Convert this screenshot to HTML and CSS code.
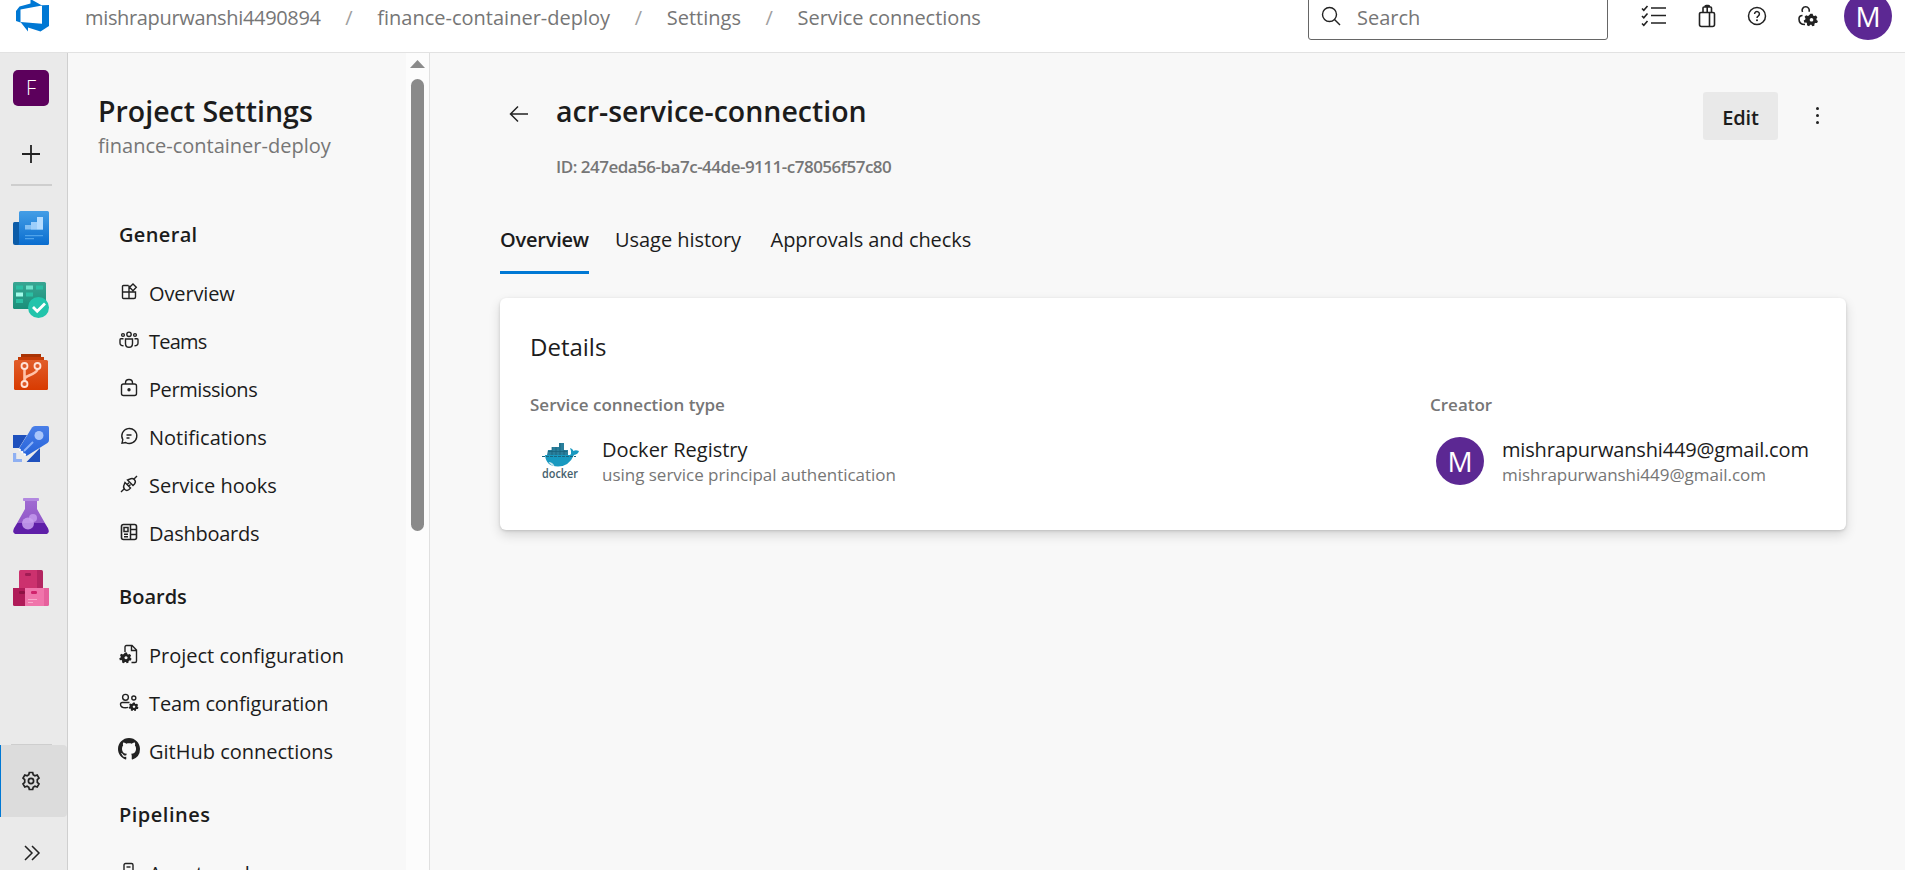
FILE: index.html
```html
<!DOCTYPE html>
<html lang="en">
<head>
<meta charset="utf-8">
<title>acr-service-connection - Service connections</title>
<link rel="stylesheet" href="styles.css">
</head>
<body>
<svg width="0" height="0" class="defs" aria-hidden="true">
  <defs>
    <linearGradient id="gBlue" x1="0" y1="0" x2="0" y2="1"><stop offset="0" stop-color="#449ee6"/><stop offset="1" stop-color="#0a6dcf"/></linearGradient>
    <linearGradient id="gGreen" x1="0" y1="0" x2="0" y2="1"><stop offset="0" stop-color="#38a693"/><stop offset="1" stop-color="#1a8f79"/></linearGradient>
    <linearGradient id="gOrange" x1="0" y1="0" x2="0" y2="1"><stop offset="0" stop-color="#e15d2a"/><stop offset="1" stop-color="#d83b01"/></linearGradient>
    <linearGradient id="gRocket" x1="0" y1="0" x2="0" y2="1"><stop offset="0" stop-color="#4a7fe8"/><stop offset="1" stop-color="#2563d9"/></linearGradient>
    <linearGradient id="gFlask" x1="0" y1="0" x2="0" y2="1"><stop offset="0" stop-color="#a06bd2"/><stop offset="1" stop-color="#8a4fc4"/></linearGradient>
    <g id="cog">
      <path fill="currentColor" fill-rule="evenodd" d="M-1.2-6h2.4l.5 1.9 1 .5 1.900-.7 1.600 1.900-1 1.700.1 1.100 1.500 1.200-.9 2.200-2-.1-.8.8-.1 2L.9 7l-1-1.600h-1.200L-2.600 7l-2.200-.9.1-2-.8-.9-2 .1-.7-2.300L-6.500 0l.1-1.200L-7.300-2.900-5.600-4.600l1.800.8 1-.5zM0-1.600a1.900 1.900 0 1 0 .01 0z"/>
    </g>
  </defs>
</svg>
<header class="topbar">
  <svg class="logo" width="34" height="34" viewBox="0 0 34 34"><path fill="#0078d4" d="M33 6v21l-8.500 5.500-12.500-4v4L4.500 23l21.500 1.700V6.300zM26 6.600 14.500 0v4.500L3.500 7.500 0 12v10l4.500 1.600V10.500z"/></svg>
  <nav class="crumbs">
    <span class="c1">mishrapurwanshi4490894</span><i>/</i><span>finance-container-deploy</span><i>/</i><span>Settings</span><i>/</i><span class="c4">Service connections</span>
  </nav>
  <div class="search">
    <svg width="20" height="20" viewBox="0 0 20 20" class="ln"><circle cx="8.500" cy="8.500" r="7"/><path d="M13.500 13.500 19 19"/></svg>
    <span>Search</span>
  </div>
  <div class="tools">
    <svg class="ln" width="26" height="24" viewBox="0 0 26 24"><path stroke-width="1.600" d="M10 4h15M10 11.500h15M10 19h15M1 4.500l1.800 1.800L6.500 2M1 12l1.800 1.800L6.500 9.500M1 19.500l1.800 1.800L6.500 17"/></svg>
    <svg class="t-bag ln" width="18" height="24" viewBox="0 0 18 24"><path stroke-width="1.600" d="M3 8.500h12a1.500 1.500 0 0 1 1.500 1.500v10.500a2 2 0 0 1-2 2h-11a2 2 0 0 1-2-2V10A1.500 1.500 0 0 1 3 8.500zM11.500 8.500v14M5 8.500V4q0-1 1-1h6.500q1 0 1 1v4.500M9.200 8.500V3M7 3q0-1.500 1.200-1.500h2.200Q11.500 1.500 11.500 3"/></svg>
    <svg class="t-help ln" width="20" height="20" viewBox="0 0 20 20"><circle cx="10" cy="10" r="8.500" stroke-width="1.500"/><path stroke-width="1.500" d="M7.600 8a2.400 2.400 0 1 1 3.800 1.900Q10 10.800 10 12"/><circle cx="10" cy="14.300" r="1" fill="#222" stroke="none"/></svg>
    <svg class="t-user ln" width="22" height="22" viewBox="0 0 22 22"><path stroke-width="1.600" d="M5.500 7A3.600 3.600 0 1 1 12 6.800M5.500 10.500Q2 10.500 2 14q0 5.500 6 5.500"/><use href="#cog" transform="translate(14.500 14.500) scale(.95)" stroke="none"/></svg>
    <div class="avatar">M</div>
  </div>
</header>
<div class="shell">
  <aside class="rail">
    <div class="tile">F</div>
    <svg class="plus ln" width="20" height="20" viewBox="0 0 20 20"><path stroke-width="1.800" d="M10 1v18M1 10h18"/></svg>
    <div class="rule"></div>
    <div class="hubs">
      <svg width="36" height="36" viewBox="0 -1 36 36"><path fill="#0c5ca8" d="M0 12.500Q0 11 1.500 11H8v23H2q-2 0-2-2z"/><path fill="url(#gBlue)" d="M7.500 0H34.500Q36 0 36 1.500V32.500q0 1.500-1.500 1.500H4.500Q6 34 6 32V1.500Q6 0 7.500 0z"/><path fill="#83bff2" d="M12 14h6v-3h6V6h6v12.500H12z"/><path fill="#b5dcff" d="M24 6h6v12.500h-6z"/><path fill="#9dcefa" d="M18 11h6v7.500h-6z"/><path fill="#4fa3ea" d="M12 24h18v1.200H12zM12 27h9v1.200h-9z"/></svg>
      <svg width="36" height="36" viewBox="0 0 36 36"><rect width="33" height="27" rx="1.500" fill="url(#gGreen)"/><path fill="#2bbfa3" d="M3 3.500h7v4H3zM23 3.500h7v4h-7zM13 10.500h7v4h-7zM3 17h7v4H3z"/><path fill="#6fe3cb" d="M13 3.500h7v4h-7z"/><path fill="#a2fbe9" d="M3 10.500h7v4H3z"/><circle cx="25.500" cy="25.500" r="10.500" fill="#22c4ab"/><path fill="none" stroke="#fff" stroke-width="2.800" d="m20 25 4.200 4.200 7.800-7.800"/></svg>
      <svg width="36" height="36" viewBox="0 0 36 36"><path fill="#a93304" d="M8 0h20v3h3v5H5V3h3z"/><path fill="#c53b06" d="M5 3h26v4H5z"/><path fill="url(#gOrange)" d="M2.500 6h31q1.500 0 1.500 1.500v27q0 1.500-1.500 1.500h-31Q1 36 1 34.500v-27Q1 6 2.500 6z"/><path fill="none" stroke="#ffc2a8" stroke-width="2.600" d="M11.500 15v12M11.500 26q0-3 4-4.300 9-3.500 9-6.700"/><g fill="#e05a28" stroke="#ffe3d8" stroke-width="1.800"><circle cx="11.500" cy="12" r="3"/><circle cx="24.500" cy="12" r="3"/><circle cx="11.500" cy="30" r="3"/></g></svg>
      <svg width="36" height="36" viewBox="0 0 36 36"><path fill="#1f51bd" d="M0 9h14L6 22H0zM27 22v14H13.500z"/><path fill="url(#gRocket)" d="M19 1.500Q20 0 22 0h12.500Q36 0 36 1.500V14q0 2-1.500 3L13.500 30 6 22.500z"/><circle cx="26" cy="9.500" r="4.500" fill="#a9c6fb"/><path stroke="#8db3f8" stroke-width="2" d="m11 25 9-9"/><path stroke="#fff" stroke-width="2" stroke-dasharray="2 1.500" d="m6 23 7.500 7"/><path fill="#8fb0f2" d="M0 27h3.200v6H9v3H0z"/></svg>
      <svg width="36" height="36" viewBox="0 0 36 36"><path fill="url(#gFlask)" d="M12 2h12v9l11 19.500Q37 36 32 36H4q-5 0-3-5.500L12 11z"/><path fill="#5f1fa8" d="M4.500 25h27l3.500 5.500Q37 36 32 36H4q-5 0-3-5.500z"/><rect x="10" width="16" height="3" rx=".8" fill="#b288e0"/><circle cx="20" cy="20" r="4" fill="#bd91e8"/><circle cx="15" cy="25.500" r="6" fill="#c9a2f0" opacity=".85"/></svg>
      <svg width="36" height="36" viewBox="0 0 36 36"><path fill="#cc316e" d="M7.500 0H24v18H6V1.500Q6 0 7.500 0z"/><path fill="#b32560" d="M24 0h4.500Q30 0 30 1.500V18h-6z"/><path fill="#b01c59" d="M0 18h12v18H1.500Q0 36 0 34.500z"/><path fill="#f075ab" d="M12 18h19v18H12z"/><path fill="#e6609c" d="M31 18h5v16.500q0 1.500-1.500 1.500H31z"/><rect x="12" y="3" width="6" height="3" rx="1.200" fill="#a01c54"/><rect x="6" y="21" width="6" height="3" rx="1.200" fill="#8d1244"/><rect x="18" y="21" width="6" height="3" rx="1.200" fill="#d0246c"/><path stroke="#f9a8cb" d="M15 29.500h9M15 32.500h5"/></svg>
    </div>
    <div class="railfoot">
      <div class="rule thin"></div>
      <div class="gear"><svg class="ln" width="20" height="20" viewBox="0 0 20 20"><path stroke-width="1.700" d="M8.300 1.500h3.400l.5 2.300 1.700 1 2.300-.8 1.800 3-1.700 1.700v2.600l1.700 1.700-1.800 3-2.300-.8-1.700 1-.5 2.300H8.300l-.5-2.300-1.700-1-2.300.8-1.800-3 1.700-1.700V8.700L2 7l1.800-3 2.300.8 1.700-1z"/><circle cx="10" cy="10" r="2.600" stroke-width="1.700"/></svg></div>
      <div class="expand"><svg class="ln" width="18" height="18" viewBox="0 0 18 18"><path stroke-width="1.500" d="m2 2 7 7-7 7M9 2l7 7-7 7"/></svg></div>
    </div>
  </aside>
  <nav class="panel">
    <div class="list">
      <h1 class="heading">Project Settings</h1>
      <p class="sub">finance-container-deploy</p>
      <section>
        <h2 class="wide">General</h2>
        <a class="snug"><svg class="ln" width="20" height="20" viewBox="0 0 20 20"><path d="M9.500 3.500h-5q-1 0-1 1v11q0 1 1 1H15q1.500 0 1.500-1.500v-5H3.500M10 3.500v13M14 2l3.300 3.300L14 8.800l-3.400-3.500z"/></svg><span>Overview</span></a>
        <a class="tighter"><svg class="ln" width="20" height="20" viewBox="0 0 20 20"><circle cx="10" cy="4.300" r="2.200"/><circle cx="4" cy="5" r="1.400"/><circle cx="16" cy="5" r="1.400"/><path d="M6.500 9h7v4.500q0 3.800-3.500 3.800t-3.500-3.800zM4.500 8.800H1.800q-.8 0-.8.900v3.300q0 2.700 3.500 2.700M15.500 8.800h2.700q.8 0 .8.900v3.300q0 2.700-3.500 2.700"/></svg><span>Teams</span></a>
        <a class="tight"><svg class="ln" width="20" height="20" viewBox="0 0 20 20"><rect x="2.500" y="6" width="15" height="11.500" rx="2"/><path d="M6.500 6V5q0-3.500 3.500-3.500T13.500 5v1"/><circle cx="10" cy="11.800" r="1" fill="#222"/></svg><span>Permissions</span></a>
        <a><svg class="ln" width="20" height="20" viewBox="0 0 20 20"><path d="M3 17.200l.8-3.500a7.500 7.500 0 1 1 3 2.900zM7.500 9h5M7.500 12h3"/></svg><span>Notifications</span></a>
        <a><svg class="ln" width="20" height="20" viewBox="0 0 20 20"><path d="m2 18 3.500-3.500M18 2l-3.500 3.500M6 8.500l5.500 5.500-1.500 1.500q-2.200 1.800-4.200 0t-.8-4.500zM8.500 6l5.500 5.500 1.500-1.500q1.800-2.200 0-4.200t-4.500-.8zM8.200 10.500l1.700-1.700M10 12l1.500-1.500"/></svg><span>Service hooks</span></a>
        <a class="snug2"><svg class="ln" width="20" height="20" viewBox="0 0 20 20"><rect x="2.500" y="2.500" width="15" height="15" rx="2" stroke-width="1.600"/><path stroke-width="1.500" d="M11.500 2.500v15M11.500 7.500h6M11.500 12.500h6M5 5.500h4v4H5zM5 12.200h4M5 14.700h4"/></svg><span>Dashboards</span></a>
      </section>
      <section>
        <h2>Boards</h2>
        <a><svg class="ln" width="20" height="20" viewBox="0 0 20 20"><path d="M6 8V3q0-1.500 1.500-1.500h5.500l4.500 4.500v11q0 1.500-1.500 1.500h-3.500M12.500 1.500V6.500h5"/><use href="#cog" transform="translate(7 13.500) scale(.82)" stroke="none"/></svg><span>Project configuration</span></a>
        <a class="snug"><svg class="ln" width="20" height="20" viewBox="0 0 20 20"><circle cx="6.500" cy="5.300" r="2.900"/><circle cx="14.800" cy="6" r="2"/><path d="M10.500 10.500H3.200q-1.700 0-1.700 1.700 0 3.500 5 3.500 1.500 0 2.500-.4"/><use href="#cog" transform="translate(15 14.500) scale(.66)" stroke="none"/></svg><span>Team configuration</span></a>
        <a><svg class="gh" width="22" height="22" viewBox="0 0 16 16"><path fill="#222" d="M8 0C3.580 0 0 3.580 0 8c0 3.540 2.290 6.530 5.470 7.590.4.070.55-.17.55-.38 0-.19-.01-.82-.01-1.490-2.010.37-2.530-.49-2.690-.94-.09-.23-.48-.94-.82-1.130-.28-.15-.68-.52-.01-.53.63-.01 1.080.58 1.230.82.72 1.210 1.870.87 2.330.66.07-.52.28-.87.51-1.070-1.780-.2-3.640-.89-3.640-3.950 0-.87.31-1.590.82-2.150-.08-.2-.36-1.020.08-2.120 0 0 .67-.21 2.200.82.64-.18 1.320-.27 2-.27s1.360.09 2 .27c1.530-1.040 2.200-.82 2.200-.82.44 1.100.16 1.920.08 2.120.51.56.82 1.270.82 2.150 0 3.070-1.870 3.750-3.650 3.950.29.25.54.73.54 1.480 0 1.070-.01 1.930-.01 2.200 0 .21.15.46.55.38A8.010 8.010 0 0 0 16 8c0-4.420-3.580-8-8-8z"/></svg><span>GitHub connections</span></a>
      </section>
      <section>
        <h2 class="wider">Pipelines</h2>
        <a><svg class="ln" width="20" height="20" viewBox="0 0 20 20"><rect x="5" y="1.500" width="9" height="17" rx="1.500"/><path d="M7.500 5h4"/></svg><span>Agent pools</span></a>
      </section>
    </div>
    <div class="track"><div class="up"></div><div class="thumb"></div></div>
  </nav>
  <main class="main">
    <div class="titlebar">
      <svg class="back ln" width="20" height="18" viewBox="0 0 20 18"><path stroke-width="1.500" d="M19 9H2M9 1.500 1.500 9 9 16.500"/></svg>
      <div class="titles">
        <h1 class="heading">acr-service-connection</h1>
        <p class="id">ID: 247eda56-ba7c-44de-9111-c78056f57c80</p>
      </div>
      <button class="edit">Edit</button>
      <div class="dots"><b></b><b></b><b></b></div>
    </div>
    <div class="tabs"><div class="tab on">Overview</div><div class="tab t2">Usage history</div><div class="tab t3">Approvals and checks</div></div>
    <div class="card">
      <h3>Details</h3>
      <div class="cols">
        <div>
          <div class="label">Service connection type</div>
          <div class="row">
            <svg class="docker" width="48" height="48" viewBox="0 0 48 48"><path fill="#2a7f9c" d="M12 13h4v-3h7V6h5v7h4v5H11z"/><path fill="#1899c0" d="M9 18h25q1.500-1 1-4l-1-3q2.500.3 3.500 3 2-1.500 5.500 0-1 3.500-5 4Q33 29.500 22 29.500 10 29.500 9 18z"/><path fill="#c8e6ee" d="M12.500 25q4 0 6 4.200-4-.7-6-4.200z"/><path stroke="#1b6680" stroke-dasharray="3 1" d="M6 19.500h34"/><path stroke="#165f78" stroke-width=".7" d="M16 10v8M20 10v8M24 6v12M28 13v5M12 14.500h19"/><text x="6" y="40.500" class="dk" textLength="36" lengthAdjust="spacingAndGlyphs">docker</text></svg>
            <div class="who"><div class="primary">Docker Registry</div><div class="secondary">using service principal authentication</div></div>
          </div>
        </div>
        <div>
          <div class="label">Creator</div>
          <div class="row">
            <div class="avatar big">M</div>
            <div class="who"><div class="primary mail">mishrapurwanshi449@gmail.com</div><div class="secondary">mishrapurwanshi449@gmail.com</div></div>
          </div>
        </div>
      </div>
    </div>
  </main>
</div>
</body>
</html>
```
FILE: styles.css
```css
* { box-sizing: border-box; }
body {
  margin: 0; height: 870px; overflow: hidden;
  display: flex; flex-direction: column;
  font-family: "Open Sans", "Noto Sans", sans-serif;
  font-size: 20px; color: #1c1c1c; background: #f8f8f8;
}
h1, h2, h3, p { margin: 0; font-weight: 600; }
.defs { position: absolute; }
.ln { fill: none; stroke: #222; stroke-width: 1.4; flex: none; color: #222; }

/* Top bar */
.topbar {
  flex: none; height: 53px; display: flex; align-items: flex-start;
  background: #fff; border-bottom: 1px solid #e2e2e2; overflow: hidden;
}
.logo { margin: -1px 0 0 16px; }
.crumbs { display: flex; margin-left: 35px; line-height: 36px; color: #767676; }
.crumbs i { font-style: normal; width: 56.7px; text-align: center; color: #a0a0a0; }
.c1 { letter-spacing: -0.34px; }
.c4 { letter-spacing: -0.06px; }
.search {
  width: 300px; height: 49px; margin: -9px 0 0 auto; padding: 15px 13px 0 12px;
  display: flex; gap: 16px; border: 1px solid #666; border-radius: 3px;
  line-height: 22px; color: #767676;
}
.search svg { margin-top: -1px; }
.tools { display: flex; align-items: center; height: 48px; margin: -8px 13px 0 33px; }
.t-bag { margin-left: 31px; }
.t-help { margin-left: 31px; }
.t-user { margin-left: 30px; }
.avatar {
  width: 48px; height: 48px; border-radius: 50%; background: #5c2893; color: #fff;
  display: flex; align-items: center; justify-content: center;
  font-size: 28px; font-weight: 400; line-height: 48px;
  flex: none; margin-left: 25px;
}

/* Project rail */
.shell { flex: 1; min-height: 0; display: flex; }
.rail {
  width: 68px; flex: none; background: #eaeaea; border-right: 1px solid #cfcfcf;
  display: flex; flex-direction: column;
}
.tile {
  width: 36px; height: 36px; margin: 17px 0 0 13px; border-radius: 5px;
  background: #5c005c; color: #fff; font-size: 20px; font-weight: 350; line-height: 36px; text-align: center;
}
.plus { margin: 38px 0 0 21px; }
.rule { width: 41px; height: 2px; margin: 20px 0 0 11px; background: #cecece; }
.hubs { display: flex; flex-direction: column; gap: 36px; margin: 24px 0 0 13px; }
.railfoot { margin-top: auto; }
.rule.thin { height: 1px; margin: 0 0 0 11px; background: #cecece; }
.gear { height: 72px; background: #dcdcdc; border-left: 1px solid #0078d4; padding: 25px 0 0 20px; border-radius: 0 4px 4px 0; }
.expand { height: 53px; padding: 27px 0 0 23px; line-height: 0; }

/* Settings navigation */
.panel { width: 362px; flex: none; display: flex; border-right: 1px solid #e0e0e0; }
.list { flex: 1; padding-left: 30px; overflow: hidden; }
.heading { font-size: 28.500px; line-height: 40px; white-space: nowrap; }
.list .heading { margin-top: 38px; }
.sub { font-weight: 400; color: #767676; line-height: 28px; margin: 1px 0 51px; }
section { padding-left: 21px; margin-bottom: 16px; }
h2 { font-size: 20px; line-height: 48px; margin-bottom: 10px; }
.wide { letter-spacing: 0.35px; }
.wider { letter-spacing: 0.5px; }
section a { display: flex; align-items: center; height: 48px; gap: 10px; line-height: 46px; white-space: nowrap; }
section a span { padding-top: 2px; }
section a svg { margin-top: -3px; }
section a .gh { margin: -4px -1px 0; }
.snug { letter-spacing: -0.13px; }
.snug2 { letter-spacing: -0.24px; }
.tight { letter-spacing: -0.42px; }
.tighter { letter-spacing: -0.8px; }
.track { width: 23px; background: #fcfcfc; padding: 7px 0 0 4px; }
.up { width: 15px; height: 8px; background: #8a8a8a; clip-path: polygon(50% 0, 100% 100%, 0 100%); }
.thumb { width: 13px; height: 452px; margin: 11px 0 0 1px; border-radius: 7px; background: #8a8a8a; }

/* Service connection */
.main { flex: 1; min-width: 0; padding: 38px 59px 0 70px; }
.titlebar { display: flex; align-items: flex-start; height: 125px; }
.back { margin: 14px 0 0 9px; }
.titles { margin-left: 27px; }
.id { font-size: 17px; line-height: 24px; letter-spacing: -0.5px; color: #767676; margin-top: 24px; white-space: nowrap; }
.edit {
  width: 75px; height: 48px; margin: 1px 0 0 auto; padding: 2px 0 0; border: 0; border-radius: 3px; background: #e9e9e9;
  font: 600 20px "Open Sans", sans-serif; letter-spacing: -0.2px; color: #1c1c1c;
}
.dots { display: flex; flex-direction: column; gap: 4px; width: 3px; margin: 16px 27px 0 38px; }
.dots b { width: 3px; height: 3px; border-radius: 50%; background: #222; }
.tabs { display: flex; height: 58px; line-height: 48px; }
.tab { height: 58px; white-space: nowrap; letter-spacing: -0.05px; }
.on { width: 89px; font-weight: 600; letter-spacing: -0.22px; border-bottom: 3px solid #0078d4; }
.t2 { margin-left: 26px; }
.t3 { margin-left: 29.500px; }
.card {
  margin-top: 24px; height: 232px; padding: 30px; background: #fff; border-radius: 6px;
  box-shadow: 0 5px 12px rgba(0,0,0,.14), 0 1px 3px rgba(0,0,0,.14);
}
h3 { font-size: 24px; font-weight: 400; line-height: 38px; }
.cols { display: grid; grid-template-columns: 900px 1fr; }
.label { font-size: 17px; font-weight: 600; line-height: 24px; color: #767676; margin-top: 27px; }
.row { display: flex; margin-top: 20px; }
.docker { margin-left: 6px; }
.dk { font: 600 12px "Open Sans", sans-serif; fill: #45606c; }
.big { margin-left: 6px; }
.who { margin-left: 18px; white-space: nowrap; }
.primary { line-height: 26px; }
.secondary { font-size: 17px; line-height: 24px; color: #767676; letter-spacing: -0.02px; }
.mail { letter-spacing: -0.16px; }
```
